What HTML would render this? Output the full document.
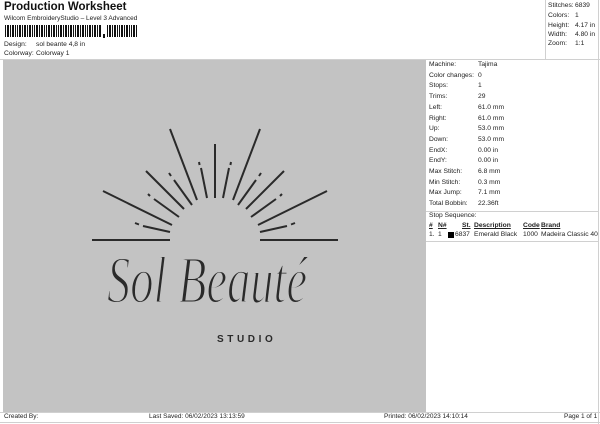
<!DOCTYPE html>
<html><head><meta charset="utf-8"><style>
*{margin:0;padding:0;box-sizing:border-box}
body{width:600px;height:424px;background:#fff;position:relative;overflow:hidden;font-family:"Liberation Sans",sans-serif;color:#222;font-size:6.7px}
.a{position:absolute;white-space:nowrap;line-height:1}
.ln{position:absolute;background:#d0d0d0}
</style></head><body>
<div class="a" style="left:4px;top:2px;font-size:11.5px;font-weight:bold;color:#111">Production Worksheet</div>
<div class="a" style="left:4px;top:16px;font-size:6.5px">Wilcom EmbroideryStudio – Level 3 Advanced</div>
<svg class="a" style="left:5px;top:25px" width="135" height="14">
<g fill="#111">
<rect x="0" y="0" width="1" height="12"/><rect x="2" y="0" width="2" height="12"/><rect x="5" y="0" width="1" height="12"/><rect x="7" y="0" width="2" height="12"/><rect x="10" y="0" width="1" height="12"/><rect x="12" y="0" width="1" height="12"/><rect x="14" y="0" width="2" height="12"/><rect x="17" y="0" width="1" height="12"/><rect x="19" y="0" width="2" height="12"/><rect x="22" y="0" width="1" height="12"/><rect x="24" y="0" width="2" height="12"/><rect x="27" y="0" width="1" height="12"/><rect x="29" y="0" width="1" height="12"/><rect x="31" y="0" width="2" height="12"/><rect x="34" y="0" width="1" height="12"/><rect x="36" y="0" width="2" height="12"/><rect x="39" y="0" width="1" height="12"/><rect x="41" y="0" width="1" height="12"/><rect x="43" y="0" width="2" height="12"/><rect x="46" y="0" width="1" height="12"/><rect x="48" y="0" width="2" height="12"/><rect x="51" y="0" width="1" height="12"/><rect x="53" y="0" width="1" height="12"/><rect x="55" y="0" width="2" height="12"/><rect x="58" y="0" width="1" height="12"/><rect x="60" y="0" width="2" height="12"/><rect x="63" y="0" width="1" height="12"/><rect x="65" y="0" width="2" height="12"/><rect x="68" y="0" width="1" height="12"/><rect x="70" y="0" width="1" height="12"/><rect x="72" y="0" width="2" height="12"/><rect x="75" y="0" width="1" height="12"/><rect x="77" y="0" width="2" height="12"/><rect x="80" y="0" width="1" height="12"/><rect x="82" y="0" width="1" height="12"/><rect x="84" y="0" width="2" height="12"/><rect x="87" y="0" width="1" height="12"/><rect x="89" y="0" width="2" height="12"/><rect x="92" y="0" width="1" height="12"/><rect x="94" y="0" width="2" height="12"/>
<rect x="98" y="9" width="2" height="4"/>
<rect x="102" y="0" width="1" height="12"/><rect x="104" y="0" width="2" height="12"/><rect x="107" y="0" width="1" height="12"/><rect x="109" y="0" width="2" height="12"/><rect x="112" y="0" width="1" height="12"/><rect x="114" y="0" width="1" height="12"/><rect x="116" y="0" width="2" height="12"/><rect x="119" y="0" width="1" height="12"/><rect x="121" y="0" width="2" height="12"/><rect x="124" y="0" width="1" height="12"/><rect x="126" y="0" width="1" height="12"/><rect x="128" y="0" width="2" height="12"/><rect x="131" y="0" width="1" height="12"/>
</g></svg>
<div class="a" style="left:4px;top:42px">Design:</div><div class="a" style="left:36px;top:42px">sol beante 4,8 in</div>
<div class="a" style="left:4px;top:51px">Colorway:</div><div class="a" style="left:36px;top:51px">Colorway 1</div>

<div class="ln" style="left:545px;top:0;width:1px;height:59px"></div>
<div class="a" style="left:548px;top:3px">Stitches:</div><div class="a" style="left:575px;top:3px">6839</div>
<div class="a" style="left:548px;top:13px">Colors:</div><div class="a" style="left:575px;top:13px">1</div>
<div class="a" style="left:548px;top:23px">Height:</div><div class="a" style="left:575px;top:23px">4.17 in</div>
<div class="a" style="left:548px;top:32px">Width:</div><div class="a" style="left:575px;top:32px">4.80 in</div>
<div class="a" style="left:548px;top:41px">Zoom:</div><div class="a" style="left:575px;top:41px">1:1</div>

<div class="ln" style="left:0;top:59px;width:600px;height:1px"></div>
<div class="ln" style="left:598px;top:0;width:1px;height:424px"></div>
<div style="position:absolute;left:3px;top:60px;width:423px;height:352px;background:#c3c3c3"></div>

<div style="position:absolute;left:426px;top:60px;width:172px;height:352px">
<div class="a" style="left:3px;top:2px">Machine:</div><div class="a" style="left:52px;top:2px">Tajima</div>
<div class="a" style="left:3px;top:12.7px">Color changes:</div><div class="a" style="left:52px;top:12.7px">0</div>
<div class="a" style="left:3px;top:23.4px">Stops:</div><div class="a" style="left:52px;top:23.4px">1</div>
<div class="a" style="left:3px;top:34.1px">Trims:</div><div class="a" style="left:52px;top:34.1px">29</div>
<div class="a" style="left:3px;top:44.8px">Left:</div><div class="a" style="left:52px;top:44.8px">61.0 mm</div>
<div class="a" style="left:3px;top:55.5px">Right:</div><div class="a" style="left:52px;top:55.5px">61.0 mm</div>
<div class="a" style="left:3px;top:66.2px">Up:</div><div class="a" style="left:52px;top:66.2px">53.0 mm</div>
<div class="a" style="left:3px;top:76.9px">Down:</div><div class="a" style="left:52px;top:76.9px">53.0 mm</div>
<div class="a" style="left:3px;top:87.6px">EndX:</div><div class="a" style="left:52px;top:87.6px">0.00 in</div>
<div class="a" style="left:3px;top:98.3px">EndY:</div><div class="a" style="left:52px;top:98.3px">0.00 in</div>
<div class="a" style="left:3px;top:109px">Max Stitch:</div><div class="a" style="left:52px;top:109px">6.8 mm</div>
<div class="a" style="left:3px;top:119.7px">Min Stitch:</div><div class="a" style="left:52px;top:119.7px">0.3 mm</div>
<div class="a" style="left:3px;top:130.4px">Max Jump:</div><div class="a" style="left:52px;top:130.4px">7.1 mm</div>
<div class="a" style="left:3px;top:141.1px">Total Bobbin:</div><div class="a" style="left:52px;top:141.1px">22.36ft</div>
<div class="ln" style="left:0;top:151px;width:172px;height:1px"></div>
<div class="a" style="left:3px;top:153px">Stop Sequence:</div>
<div class="a" style="left:3px;top:163px;font-weight:bold;text-decoration:underline">#</div>
<div class="a" style="left:12px;top:163px;font-weight:bold;text-decoration:underline">N#</div>
<div class="a" style="left:36px;top:163px;font-weight:bold;text-decoration:underline">St.</div>
<div class="a" style="left:48px;top:163px;font-weight:bold;text-decoration:underline">Description</div>
<div class="a" style="left:97px;top:163px;font-weight:bold;text-decoration:underline">Code</div>
<div class="a" style="left:115px;top:163px;font-weight:bold;text-decoration:underline">Brand</div>
<div class="a" style="left:3px;top:172px">1.</div><div class="a" style="left:12px;top:172px">1</div>
<div style="position:absolute;left:22px;top:172px;width:6px;height:6px;background:#000"></div>
<div class="a" style="left:29px;top:172px">6837</div><div class="a" style="left:48px;top:172px">Emerald Black</div>
<div class="a" style="left:97px;top:172px">1000</div><div class="a" style="left:115px;top:172px">Madeira Classic 40</div>
<div class="ln" style="left:0;top:181px;width:172px;height:1px"></div>
</div>

<svg style="position:absolute;left:0;top:0" width="600" height="424">
<g stroke="#2a2a2a" stroke-width="2" fill="none">
<g id="h">
<line x1="92" y1="240" x2="170" y2="240"/>
<line x1="103" y1="191" x2="172" y2="225"/>
<line x1="135" y1="223" x2="139" y2="224.5"/><line x1="143" y1="226" x2="170" y2="232"/>
<line x1="146" y1="171" x2="184" y2="209"/>
<line x1="148" y1="194" x2="150" y2="196"/><line x1="154" y1="199" x2="179" y2="217"/>
<line x1="169" y1="173" x2="171" y2="176"/><line x1="174" y1="180" x2="192" y2="205"/>
<line x1="170" y1="129" x2="197" y2="200"/>
<line x1="199" y1="162" x2="199.6" y2="165"/><line x1="201" y1="168" x2="207" y2="198"/>
</g>
<use href="#h" transform="translate(430,0) scale(-1,1)"/>
<line x1="215" y1="144" x2="215" y2="198"/>
</g>
<text x="129" y="252" font-family="Liberation Serif" font-style="italic" font-size="56" fill="#2a2a2a" stroke="#c3c3c3" stroke-width="1.6" transform="scale(0.83,1.2)">Sol Beauté</text>
<text x="217" y="342" font-family="Liberation Sans" font-weight="bold" font-size="10" fill="#2a2a2a" letter-spacing="3.6">STUDIO</text>
</svg>

<div class="ln" style="left:0;top:412px;width:600px;height:1px"></div>
<div class="ln" style="left:0;top:422px;width:600px;height:1px"></div>
<div class="a" style="left:4px;top:414px;font-size:6.5px">Created By:</div>
<div class="a" style="left:149px;top:414px;font-size:6.5px">Last Saved: 06/02/2023 13:13:59</div>
<div class="a" style="left:384px;top:414px;font-size:6.5px">Printed: 06/02/2023 14:10:14</div>
<div class="a" style="left:564px;top:414px;font-size:6.5px">Page 1 of 1</div>
</body></html>
